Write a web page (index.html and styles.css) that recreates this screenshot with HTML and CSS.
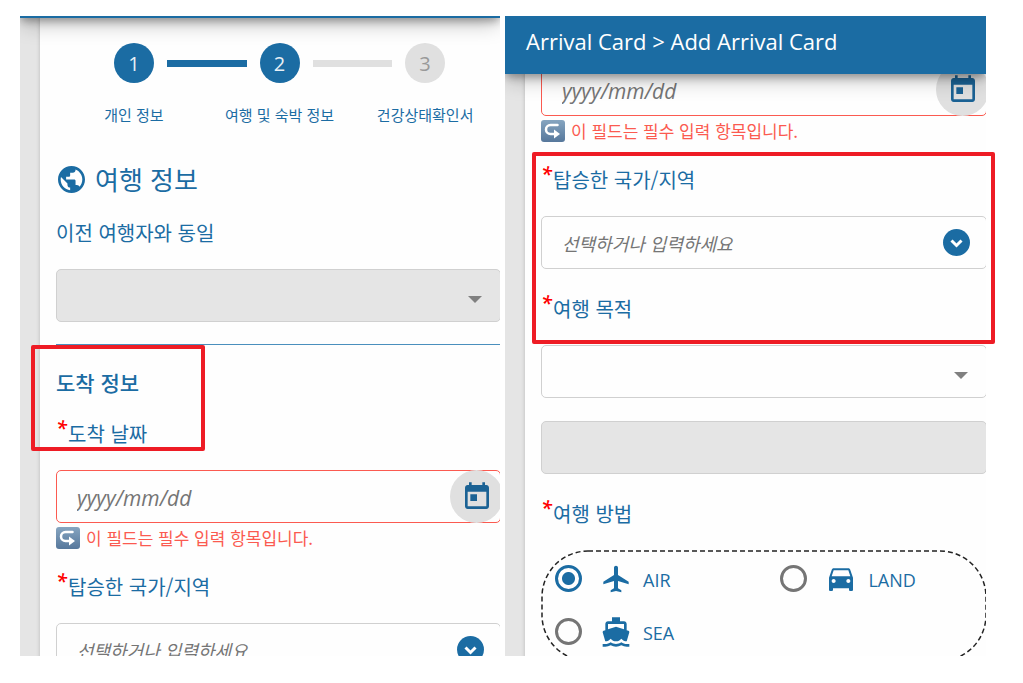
FILE: index.html
```html
<!DOCTYPE html>
<html lang="ko">
<head>
  <meta charset="UTF-8" />
  <meta name="viewport" content="width=device-width, initial-scale=1.0"/>
  <title>Arrival Card</title>
  <link rel="stylesheet" href="styles.css">
</head>
<body>
  <!-- icons -->
  <svg class="sprite" aria-hidden="true">
    <symbol id="i-globe" viewBox="2 2 20 20"><path d="M12 2C6.48 2 2 6.48 2 12s4.48 10 10 10 10-4.48 10-10S17.52 2 12 2zm-1 17.93c-3.95-.49-7-3.85-7-7.93 0-.62.08-1.21.21-1.79L9 15v1c0 1.1.9 2 2 2v1.93zm6.9-2.54c-.26-.81-1-1.39-1.9-1.39h-1v-3c0-.55-.45-1-1-1H8v-2h2c.55 0 1-.45 1-1V7h2c1.1 0 2-.9 2-2v-.41c2.93 1.19 5 4.06 5 7.41 0 2.08-.8 3.97-2.1 5.39z"/></symbol>
    <symbol id="i-calendar" viewBox="0 0 24 24"><path d="M19 3h-1V1h-2v2H8V1H6v2H5c-1.11 0-1.99.9-1.99 2L3 19c0 1.1.89 2 2 2h14c1.1 0 2-.9 2-2V5c0-1.1-.9-2-2-2zm0 16H5V8h14v11zM7 10h5v5H7z"/></symbol>
    <symbol id="i-caret" viewBox="0 0 14 7"><path d="M0 0h14L7 7z"/></symbol>
    <symbol id="i-chevron" viewBox="0 0 27 27"><path d="M8.5 11.5l5 5 5-5" fill="none" stroke="#fff" stroke-width="3"/></symbol>
    <symbol id="i-return" viewBox="0 0 24 22"><path d="M16.500 5H9.500a4.500 4.500 0 0 0 0 9H14" fill="none" stroke="#fff" stroke-width="2.500" stroke-linecap="round"/><path d="M13 9.500l6 4.500-6 4.500z" fill="#fff"/></symbol>
    <symbol id="i-plane" viewBox="0 0 24 24"><path d="M21.500 16v-2l-8-5V3.500c0-.83-.67-1.500-1.500-1.500s-1.500.67-1.500 1.500V9l-8 5v2l8-2.500V19l-2.500 1.500V22l4-1 4 1v-1.500L13.500 19v-5.500l8 2.500z"/></symbol>
    <symbol id="i-car" viewBox="0 0 24 24"><path d="M18.920 5.010C18.720 4.420 18.160 4 17.500 4h-11c-.66 0-1.210.42-1.420 1.010L3 11v9c0 .55.45 1 1 1h1c.55 0 1-.45 1-1v-1h12v1c0 .55.45 1 1 1h1c.55 0 1-.45 1-1v-9l-2.080-5.990zM6.500 15c-.83 0-1.500-.67-1.500-1.500S5.670 12 6.500 12s1.500.67 1.500 1.500S7.330 15 6.500 15zm11 0c-.83 0-1.500-.67-1.500-1.500s.67-1.500 1.500-1.500 1.500.67 1.500 1.500-.67 1.500-1.500 1.500zM5 10l1.500-4.500h11L19 10H5z"/></symbol>
    <symbol id="i-ship" viewBox="0 0 24 24"><path d="M20 21c-1.390 0-2.780-.47-4-1.320-2.440 1.710-5.560 1.710-8 0C6.780 20.530 5.390 21 4 21H2v2h2c1.380 0 2.740-.35 4-.99 2.520 1.290 5.480 1.290 8 0 1.260.65 2.620.99 4 .99h2v-2h-2zM3.950 19H4c1.600 0 3.020-.88 4-2 .98 1.120 2.400 2 4 2s3.020-.88 4-2c.98 1.120 2.400 2 4 2h.05l1.890-6.680c.08-.26.06-.54-.06-.78s-.34-.42-.6-.5L20 10.620V6c0-1.100-.9-2-2-2h-3V1H9v3H6c-1.100 0-2 .9-2 2v4.620l-1.290.42c-.26.08-.48.26-.6.5s-.15.52-.06.78L3.950 19zM6 6h12v3.970L12 8 6 9.970V6z"/></symbol>
  </svg>

  <main class="shots">
    <section class="shot">
      <div class="screen">
        <div class="topbar topbar-cut"></div>
        <form class="sheet sheet-first">
          <div class="steps">
            <span class="circle done">1</span>
            <span class="bar done"></span>
            <span class="circle done">2</span>
            <span class="bar"></span>
            <span class="circle">3</span>
          </div>
          <div class="step-names">
            <span>개인 정보</span>
            <span>여행 및 숙박 정보</span>
            <span>건강상태확인서</span>
          </div>

          <h2><svg class="globe"><use href="#i-globe"/></svg>여행 정보</h2>

          <label class="title" for="same">이전 여행자와 동일</label>
          <div class="field disabled">
            <select id="same" disabled></select>
            <svg class="caret"><use href="#i-caret"/></svg>
          </div>

          <hr>
          <h3>도착 정보</h3>

          <label class="title" for="date1"><span class="req">*</span>도착 날짜</label>
          <div class="field error">
            <input type="text" class="latin" id="date1" placeholder="yyyy/mm/dd">
            <button type="button" class="cal-btn" aria-label="날짜 선택"><svg><use href="#i-calendar"/></svg></button>
          </div>
          <p class="message"><svg><use href="#i-return"/></svg>이 필드는 필수 입력 항목입니다.</p>

          <label class="title" for="country1"><span class="req">*</span>탑승한 국가/지역</label>
          <div class="field">
            <input type="text" id="country1" placeholder="선택하거나 입력하세요">
            <button type="button" class="open-btn" aria-label="목록 열기"><svg><use href="#i-chevron"/></svg></button>
          </div>
        </form>
      </div>
      <div class="mark mark-date"></div>
    </section>

    <section class="shot">
      <div class="screen">
        <header class="topbar">Arrival Card &gt; Add Arrival Card</header>
        <form class="sheet sheet-scrolled">
          <div class="field error">
            <input type="text" class="latin" id="date2" placeholder="yyyy/mm/dd" aria-label="도착 날짜">
            <button type="button" class="cal-btn" aria-label="날짜 선택"><svg><use href="#i-calendar"/></svg></button>
          </div>
          <p class="message"><svg><use href="#i-return"/></svg>이 필드는 필수 입력 항목입니다.</p>

          <label class="title" for="country2"><span class="req">*</span>탑승한 국가/지역</label>
          <div class="field">
            <input type="text" id="country2" placeholder="선택하거나 입력하세요">
            <button type="button" class="open-btn" aria-label="목록 열기"><svg><use href="#i-chevron"/></svg></button>
          </div>

          <label class="title" for="purpose"><span class="req">*</span>여행 목적</label>
          <div class="field">
            <select id="purpose"></select>
            <svg class="caret"><use href="#i-caret"/></svg>
          </div>
          <div class="field disabled other">
            <input type="text" disabled aria-label="기타 목적">
          </div>

          <fieldset>
            <legend class="title"><span class="req">*</span>여행 방법</legend>
            <div class="modes">
              <svg class="dashes" aria-hidden="true"><rect x="1" y="1" rx="46"/></svg>
              <label class="mode"><input type="radio" name="mode" checked><svg><use href="#i-plane"/></svg><span>AIR</span></label>
              <label class="mode"><input type="radio" name="mode"><svg><use href="#i-car"/></svg><span>LAND</span></label>
              <label class="mode"><input type="radio" name="mode"><svg><use href="#i-ship"/></svg><span>SEA</span></label>
            </div>
          </fieldset>
        </form>
      </div>
      <div class="mark mark-country"></div>
    </section>
  </main>
</body>
</html>
```
FILE: styles.css
```css
* {
  box-sizing: border-box;
}

body {
  margin: 0;
  height: 100vh;
  padding: 16px 37px 27px 20px;
  background: #fff;
  color: #1b6ca3;
  font-family: "Noto Sans CJK KR", "Noto Sans", sans-serif;
}

.sprite {
  display: none;
}

svg {
  fill: currentColor;
  flex: none;
}

.shots {
  display: grid;
  grid-template-columns: 480fr 481fr;
  gap: 5px;
  height: 100%;
}

.shot {
  position: relative;
  min-width: 0;
  min-height: 0;
}

.screen {
  position: relative;
  height: 100%;
  overflow: hidden;
  background: #e5e5e5;
}

/* header stays over the scrolled form */
.topbar {
  position: absolute;
  top: 0;
  left: 0;
  right: 0;
  z-index: 2;
  height: 58px;
  padding: 0 21px;
  background: #1b6ca3;
  color: #fff;
  font-family: "Open Sans", sans-serif;
  font-size: 22px;
  line-height: 50px;
  white-space: nowrap;
  box-shadow: 0 4px 8px -1px rgba(0,0,0,0.3), 0 8px 20px -2px rgba(0,0,0,0.25);
}

/* only its lower edge shows */
.topbar-cut {
  top: -56px;
}

.sheet {
  min-height: 100%;
  margin-left: 20px;
  margin-right: -1px;
  padding-left: 16px;
  background: #fefefe;
  box-shadow: 0 0 4px rgba(0,0,0,0.2);
}

.sheet-first {
  padding-top: 27px;
}

.sheet-scrolled {
  padding-top: 47px;
}

/* steps */
.steps {
  display: flex;
  align-items: center;
  gap: 13px;
  padding: 0 56px 0 58px;
}

.circle {
  width: 40px;
  height: 40px;
  border-radius: 50%;
  background: #e0e0e0;
  color: #999;
  font-family: "Open Sans", sans-serif;
  font-size: 20px;
  line-height: 42px;
  text-align: center;
}

.bar {
  flex: 1;
  height: 7px;
  background: #e0e0e0;
}

.done {
  background: #1b6ca3;
  color: #e8f0f6;
}

.step-names {
  display: grid;
  grid-template-columns: 1fr 1fr 1fr;
  margin: 22px 3px 0 5px;
  font-size: 15px;
  line-height: 20px;
  text-align: center;
  white-space: nowrap;
}

h2 {
  display: flex;
  align-items: center;
  gap: 10px;
  margin: 40px 0 0 2px;
  font-size: 26px;
  font-weight: 400;
  line-height: 28px;
}

.globe {
  width: 27px;
  height: 27px;
}

h3 {
  margin: 25px 0 0;
  font-size: 21px;
  font-weight: 500;
  line-height: 24px;
}

hr {
  height: 1px;
  margin: 22px 0 0;
  border: none;
  background: #4a8fbd;
}

.title {
  display: block;
  margin: 25px 0 21px;
  padding: 0;
  font-size: 20px;
  line-height: 30px;
}

.req {
  display: inline-block;
  width: 12px;
  color: #f00;
  font-family: "Open Sans", sans-serif;
  font-style: italic;
  font-weight: 600;
  line-height: 16px;
  vertical-align: 7px;
}

/* fields */
.field {
  display: flex;
  align-items: center;
  height: 53px;
  border: 1px solid #d0d0d0;
  border-radius: 5px;
}

.field input,
.field select {
  flex: 1;
  min-width: 0;
  height: 100%;
  padding: 0 0 0 20px;
  border: none;
  background: none;
  font-family: inherit;
  font-size: 18px;
  outline: none;
  appearance: none;
}

.field input::placeholder {
  color: #757575;
  font-style: italic;
  opacity: 1;
}

.field input.latin {
  padding-top: 3px;
  font-family: "Open Sans", sans-serif;
  font-size: 21px;
}

.field.disabled {
  background: #e5e5e5;
}

.field.error {
  border-color: #fb5a50;
}

.other {
  margin-top: 23px;
}

.caret {
  width: 14px;
  height: 7px;
  margin: 7px 18px 0 0;
  color: #808080;
}

.cal-btn,
.open-btn {
  display: flex;
  align-items: center;
  justify-content: center;
  flex: none;
  padding: 0;
  border: none;
  border-radius: 50%;
  cursor: pointer;
}

.cal-btn {
  width: 53px;
  height: 53px;
  margin-right: -3px;
  background: #e0e0e0;
  color: #1b6294;
}

.cal-btn svg {
  width: 32px;
  height: 32px;
}

.open-btn {
  width: 27px;
  height: 27px;
  margin-right: 16px;
  background: #1b6ca3;
}

.open-btn svg {
  width: 27px;
  height: 27px;
}

.message {
  display: flex;
  align-items: center;
  gap: 6px;
  height: 24px;
  margin: 0;
  padding-top: 6px;
  color: #fb5a50;
  font-size: 17px;
  line-height: 24px;
  white-space: nowrap;
}

.message svg {
  width: 24px;
  height: 22px;
  border-radius: 3px;
  background: linear-gradient(#86a5c0, #56779b);
}

/* travel modes */
fieldset {
  min-width: 0;
  margin: 25px 0 0;
  padding: 0;
  border: none;
}

legend.title {
  margin: 0;
  padding-bottom: 21px;
}

.modes {
  position: relative;
  display: grid;
  grid-template-columns: 51fr 49fr;
  grid-auto-rows: 53px;
  height: 112px;
  padding: 2px;
}

.dashes {
  position: absolute;
  inset: 0;
  width: 100%;
  height: 100%;
}

.dashes rect {
  width: calc(100% - 2px);
  height: calc(100% - 2px);
  fill: none;
  stroke: #222;
  stroke-width: 1.5;
  stroke-dasharray: 5 3;
}

.mode {
  position: relative;
  display: flex;
  align-items: center;
  padding-left: 12px;
  font-family: "Open Sans", sans-serif;
  font-size: 18px;
}

.mode input {
  width: 27px;
  height: 27px;
  margin: 0 18px 0 0;
  border: 3px solid #757575;
  border-radius: 50%;
  appearance: none;
}

.mode input:checked {
  border-color: #1b6ca3;
  background: radial-gradient(circle, #1b6ca3 6px, transparent 7px);
}

.mode svg {
  width: 32px;
  height: 32px;
  margin-right: 11px;
}

.mode span {
  padding-top: 3px;
}

/* red highlight boxes */
.mark {
  position: absolute;
  z-index: 3;
  border: 4px solid #ee1c25;
  border-radius: 2px;
  pointer-events: none;
}

.mark-date {
  top: 329px;
  left: 11px;
  width: 174px;
  height: 106px;
}

.mark-country {
  top: 136px;
  left: 27px;
  right: -9px;
  height: 192px;
}
```
